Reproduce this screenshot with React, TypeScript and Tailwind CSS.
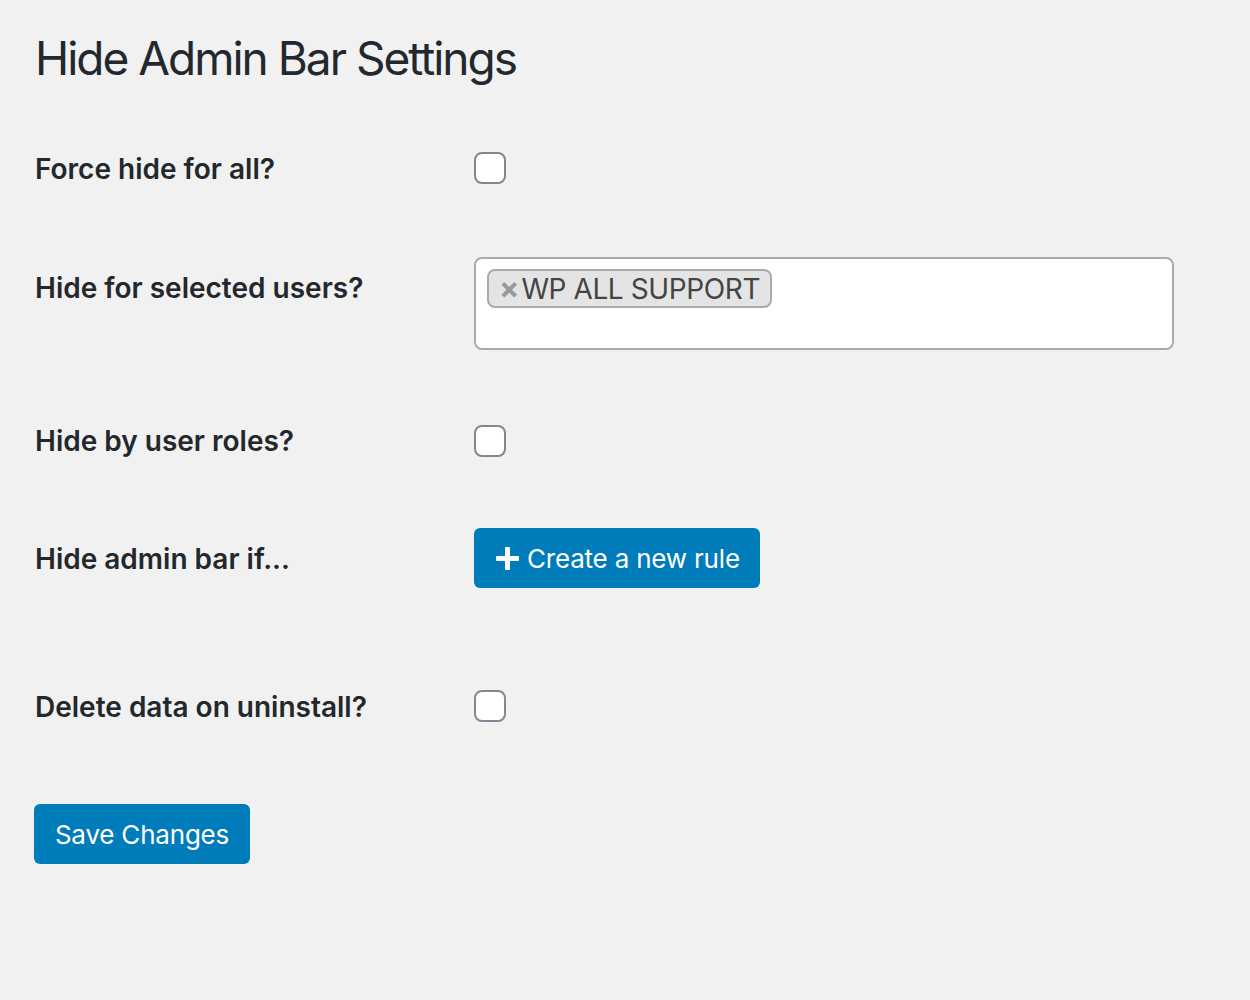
import React from "react";

function Checkbox() {
  return (
    <div className="w-[32px] h-[32px] rounded-[8px] border-2 border-[#7e8993] bg-white shrink-0" />
  );
}

export default function App() {
  return (
    <div
      className="min-h-[1000px] w-full bg-[#f1f1f1] pl-[35px] text-[#23282d]"
      style={{ fontFamily: "Inter, 'Noto Sans', sans-serif" }}
    >
      <h1 className="pt-[28px] text-[46px] leading-[60px] font-normal tracking-[-2px] text-[#23282d]">
        Hide Admin Bar Settings
      </h1>

      <div className="flex flex-col">
        {/* Row 1 */}
        <div className="flex items-start mt-[63px]">
          <div className="w-[439px] shrink-0 text-[28px] leading-[36px] font-semibold">Force hide for all?</div>
          <div className="mt-[1px]">
            <Checkbox />
          </div>
        </div>

        {/* Row 2 */}
        <div className="flex items-start mt-[70px]">
          <div className="w-[439px] shrink-0 text-[28px] leading-[36px] font-semibold mt-[13px]">
            Hide for selected users?
          </div>
          <div className="w-[700px] h-[93px] rounded-[8px] border-2 border-[#aaaaaa] bg-white pl-[11px] pt-[10px]">
            <div className="inline-flex items-center h-[39px] rounded-[8px] border-2 border-[#aaaaaa] bg-[#e4e4e4] pl-[10px] pr-[10px]">
              <span className="text-[#999999] text-[30px] font-bold leading-none mr-[2px] -mt-[2px]">×</span>
              <span className="text-[28px] leading-none text-[#444444] tracking-[-0.4px]">WP ALL SUPPORT</span>
            </div>
          </div>
        </div>

        {/* Row 3 */}
        <div className="flex items-start mt-[73px]">
          <div className="w-[439px] shrink-0 text-[28px] leading-[36px] font-semibold">Hide by user roles?</div>
          <div className="mt-[2px]">
            <Checkbox />
          </div>
        </div>

        {/* Row 4 */}
        <div className="flex items-start mt-[69px]">
          <div className="w-[439px] shrink-0 text-[28px] leading-[36px] font-semibold mt-[13px]">
            Hide admin bar if...
          </div>
          <button className="h-[60px] w-[286px] rounded-[6px] bg-[#007cba] text-white flex items-center pl-[22px] text-[26px] tracking-[-0.2px]">
            <svg width="23" height="23" viewBox="0 0 23 23" className="mr-[8px]">
              <rect x="9" y="0" width="5" height="23" rx="1" fill="white" />
              <rect x="0" y="9" width="23" height="5" rx="1" fill="white" />
            </svg>
            <span>Create a new rule</span>
          </button>
        </div>

        {/* Row 5 */}
        <div className="flex items-start mt-[101px]">
          <div className="w-[439px] shrink-0 text-[28px] leading-[36px] font-semibold">Delete data on uninstall?</div>
          <div className="mt-[1px]">
            <Checkbox />
          </div>
        </div>

        <div className="mt-[79px]">
          <button className="h-[60px] w-[216px] rounded-[6px] bg-[#007cba] text-white text-[26px] -ml-[1px] tracking-[-0.2px]">
            Save Changes
          </button>
        </div>
      </div>
    </div>
  );
}
